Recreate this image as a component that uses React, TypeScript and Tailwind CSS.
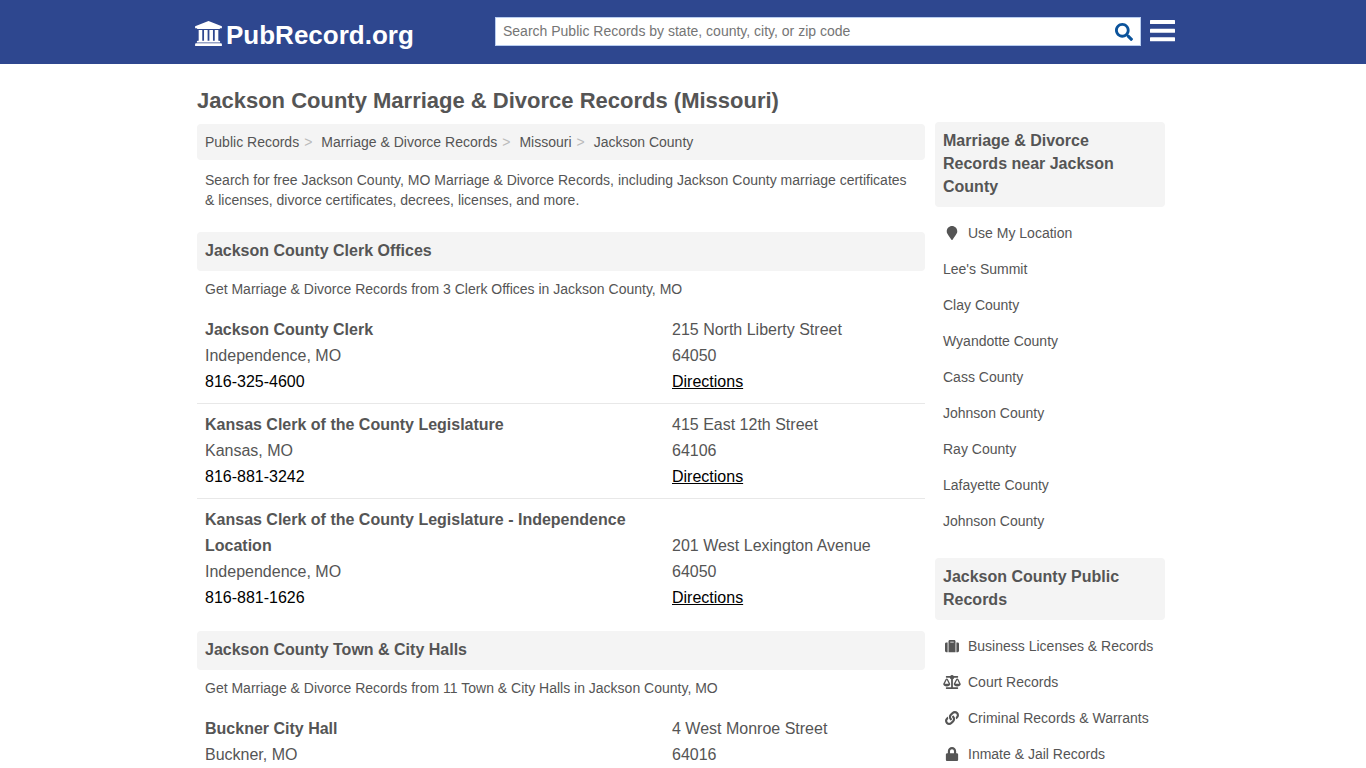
import React from 'react';
import type { IconType } from 'react-icons';
import {
  FaBalanceScale,
  FaLink,
  FaLock,
  FaMapMarker,
  FaSearch,
  FaSuitcase
} from 'react-icons/fa';

interface Office {
  name: string;
  city: string;
  phone?: string;
  street: string;
  zip: string;
}

interface SideLink {
  label: string;
  icon?: IconType;
}

const breadcrumbs = ['Public Records', 'Marriage & Divorce Records', 'Missouri'];

const clerkOffices: Office[] = [
  {
    name: 'Jackson County Clerk',
    city: 'Independence, MO',
    phone: '816-325-4600',
    street: '215 North Liberty Street',
    zip: '64050'
  },
  {
    name: 'Kansas Clerk of the County Legislature',
    city: 'Kansas, MO',
    phone: '816-881-3242',
    street: '415 East 12th Street',
    zip: '64106'
  },
  {
    name: 'Kansas Clerk of the County Legislature - Independence Location',
    city: 'Independence, MO',
    phone: '816-881-1626',
    street: '201 West Lexington Avenue',
    zip: '64050'
  }
];

const cityHalls: Office[] = [
  {
    name: 'Buckner City Hall',
    city: 'Buckner, MO',
    street: '4 West Monroe Street',
    zip: '64016'
  }
];

const nearbyLinks: SideLink[] = [
  { label: 'Use My Location', icon: FaMapMarker },
  { label: "Lee's Summit" },
  { label: 'Clay County' },
  { label: 'Wyandotte County' },
  { label: 'Cass County' },
  { label: 'Johnson County' },
  { label: 'Ray County' },
  { label: 'Lafayette County' },
  { label: 'Johnson County' }
];

const recordLinks: SideLink[] = [
  { label: 'Business Licenses & Records', icon: FaSuitcase },
  { label: 'Court Records', icon: FaBalanceScale },
  { label: 'Criminal Records & Warrants', icon: FaLink },
  { label: 'Inmate & Jail Records', icon: FaLock }
];

// Courthouse with four columns
const LogoIcon: React.FC = () => (
  <svg width="27" height="25" viewBox="0 0 1920 1792" fill="currentColor">
    <path d="M960 0l960 384v128h-128q0 26-20.500 45t-48.500 19h-1526q-28 0-48.500-19t-20.500-45h-128v-128zM256 640h256v768h128v-768h256v768h128v-768h256v768h128v-768h256v768h59q28 0 48.500 19t20.500 45v64h-1664v-64q0-26 20.500-45t48.500-19h59v-768zM1851 1600q28 0 48.500 19t20.500 45v128h-1920v-128q0-26 20.500-45t48.500-19h1782z" />
  </svg>
);

const Header: React.FC = () => (
  <header className="bg-[#2e478f]">
    <div className="mx-auto flex h-16 max-w-[984px] items-center pl-1">
      <a href="#" className="flex items-center gap-1 pt-[3px] text-white">
        <LogoIcon />
        <span className="pt-[3px] text-[26px] leading-8 font-bold">
          PubRecord.org
        </span>
      </a>
      <form className="mb-0.5 ml-auto flex h-[29px] w-[646px] border border-[#b8cdf0] bg-white">
        <input
          type="text"
          aria-label="Search Public Records"
          placeholder="Search Public Records by state, county, city, or zip code"
          className="min-w-0 flex-1 px-[7px] text-sm text-[#555] outline-none placeholder:text-[#757575]"
        />
        <button
          type="button"
          aria-label="Search"
          className="px-[7px] pt-0.5 text-[#0b539b]"
        >
          <FaSearch className="size-[18px]" />
        </button>
      </form>
      <button
        type="button"
        aria-label="Menu"
        className="mb-0.5 ml-[9px] text-white"
      >
        <svg width="25" height="22" viewBox="0 0 25 22" fill="currentColor">
          <rect width="25" height="4" rx="0.5" />
          <rect y="8.7" width="25" height="4" rx="0.5" />
          <rect y="17.3" width="25" height="4" rx="0.5" />
        </svg>
      </button>
    </div>
  </header>
);

const OfficeRow: React.FC<{ office: Office }> = ({ office }) => (
  <li className="flex items-end border-b border-[#e8e8e8] py-2 text-base leading-[26px] last:border-b-0">
    <div className="min-w-0 flex-1 px-2">
      <h3 className="font-bold">{office.name}</h3>
      <p>{office.city}</p>
      {office.phone && (
        <a href="#" className="block text-black">
          {office.phone}
        </a>
      )}
    </div>
    <div className="w-[261px] shrink-0 px-2">
      <p>{office.street}</p>
      <p>{office.zip}</p>
      {office.phone && (
        <a href="#" className="block text-black underline">
          Directions
        </a>
      )}
    </div>
  </li>
);

interface OfficeSectionProps {
  title: string;
  description: string;
  offices: Office[];
}

const OfficeSection: React.FC<OfficeSectionProps> = ({
  title,
  description,
  offices
}) => (
  <section className="mt-3">
    <h2 className="rounded bg-[#f4f4f4] px-2 pt-[7px] pb-[9px] text-base leading-[23px] font-bold">
      {title}
    </h2>
    <p className="mt-2 mb-2.5 px-2 text-sm leading-5">{description}</p>
    <ul>
      {offices.map((office) => (
        <OfficeRow key={office.name} office={office} />
      ))}
    </ul>
  </section>
);

const SideList: React.FC<{ title: string; links: SideLink[] }> = ({
  title,
  links
}) => (
  <section>
    <h2 className="rounded bg-[#f4f4f4] px-2 pt-[7px] pb-[9px] text-base leading-[23px] font-bold">
      {title}
    </h2>
    <ul className="mt-2 px-2 text-sm">
      {links.map(({ label, icon: Icon }, index) => (
        <li key={index}>
          <a href="#" className="flex h-9 items-center gap-[7px]">
            {Icon && <Icon className="h-3.5 w-[18px] shrink-0" />}
            {label}
          </a>
        </li>
      ))}
    </ul>
  </section>
);

export default function App() {
  return (
    <div className="min-h-screen bg-white font-['Liberation_Sans',Arial,sans-serif] text-[#555]">
      <Header />
      <div className="mx-auto flex max-w-[984px] gap-2.5 pr-2.5 pl-1.5">
        <main className="min-w-0 flex-1">
          <h1 className="pt-[23px] pb-[9px] text-[22px] leading-7 font-bold">
            Jackson County Marriage &amp; Divorce Records (Missouri)
          </h1>
          <nav
            aria-label="Breadcrumb"
            className="rounded bg-[#f4f4f4] px-2 text-sm leading-9"
          >
            <ol className="flex">
              {breadcrumbs.map((crumb) => (
                <li key={crumb} className="flex">
                  <a href="#">{crumb}</a>
                  <span className="mr-[9px] ml-[5px] text-[#bbb]">&gt;</span>
                </li>
              ))}
              <li>Jackson County</li>
            </ol>
          </nav>
          <p className="mt-2.5 mb-[22px] px-2 text-sm leading-5">
            Search for free Jackson County, MO Marriage &amp; Divorce Records,
            including Jackson County marriage certificates &amp; licenses,
            divorce certificates, decrees, licenses, and more.
          </p>
          <OfficeSection
            title="Jackson County Clerk Offices"
            description="Get Marriage & Divorce Records from 3 Clerk Offices in Jackson County, MO"
            offices={clerkOffices}
          />
          <OfficeSection
            title="Jackson County Town & City Halls"
            description="Get Marriage & Divorce Records from 11 Town & City Halls in Jackson County, MO"
            offices={cityHalls}
          />
        </main>
        <aside className="flex w-[230px] shrink-0 flex-col gap-[19px] pt-[58px]">
          <SideList
            title="Marriage & Divorce Records near Jackson County"
            links={nearbyLinks}
          />
          <SideList title="Jackson County Public Records" links={recordLinks} />
        </aside>
      </div>
    </div>
  );
}
